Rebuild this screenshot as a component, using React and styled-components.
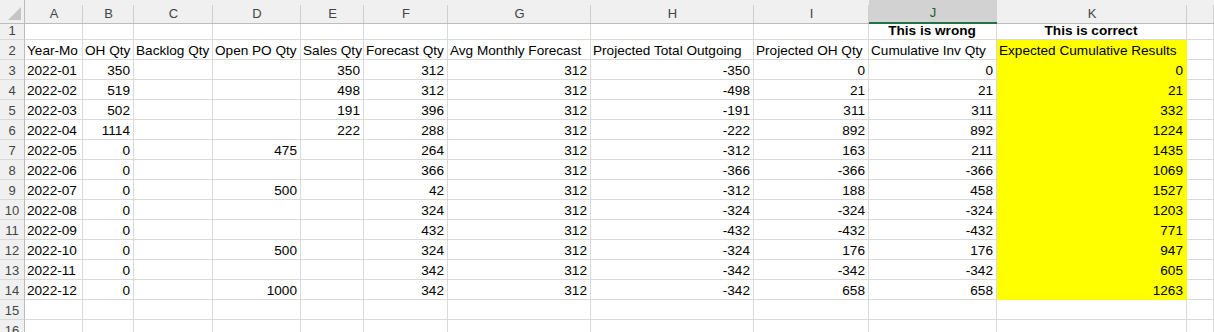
import React from "react"
import styled, { createGlobalStyle } from "styled-components"

const GlobalStyle = createGlobalStyle`
    body {
        margin:0;
        background:#ffffff;
        font-family:"Liberation Sans", Arial, sans-serif;
        overflow:hidden;
    }
`

const COLS = [58, 51, 79, 88, 63, 84, 143, 163, 115, 128, 190]
const LETTERS = ["A", "B", "C", "D", "E", "F", "G", "H", "I", "J", "K", "L"]

const Sheet = styled.div`
    display:grid;
    grid-template-columns: 25px ${COLS.map(c => c + "px").join(" ")} 27px;
    grid-auto-rows:20px;
    width:1214px;
    overflow:hidden;
    font-size:13.6px;
    color:#000;
`
const Corner = styled.div`
    height:24px;
    background:#f0f0f0;
    border-right:1px solid #bcbcbc;
    border-bottom:1px solid #bcbcbc;
    box-sizing:border-box;
    position:relative;
    &::after {
        content:"";
        position:absolute;
        right:3px;
        bottom:3px;
        width:0;
        height:0;
        border-left:13px solid transparent;
        border-bottom:13px solid #c4c4c4;
    }
`
const ColHead = styled.div`
    height:24px;
    box-sizing:border-box;
    display:flex;
    align-items:center;
    justify-content:center;
    padding-top:3px;
    font-size:13px;
    background:${p => p.$active ? "#d2d2d2" : "#f0f0f0"};
    color:${p => p.$active ? "#1a5e35" : "#444"};
    border-bottom:${p => p.$active ? "2px solid #217346" : "1px solid #bcbcbc"};
    position:relative;
    &::after {
        content:"";
        position:absolute;
        right:0;
        top:5px;
        bottom:0;
        width:1px;
        background:#cfcfcf;
    }
`
const RowHead = styled.div`
    box-sizing:border-box;
    background:#f0f0f0;
    color:#444;
    font-size:13px;
    border-right:1px solid #bcbcbc;
    border-bottom:1px solid #d9d9d9;
    display:flex;
    align-items:center;
    justify-content:center;
    padding-top:1px;
`
const Cell = styled.div`
    box-sizing:border-box;
    border-right:1px solid ${p => p.$fill ? p.$fill : "#dadada"};
    border-bottom:1px solid ${p => p.$fill ? p.$fill : "#dadada"};
    background:${p => p.$fill || "transparent"};
    display:flex;
    align-items:center;
    justify-content:${p => p.$align === "right" ? "flex-end" : p.$align === "center" ? "center" : "flex-start"};
    padding:2px 3px 0 2px;
    font-weight:${p => p.$bold ? 700 : 400};
    white-space:nowrap;
    overflow:visible;
`

const headers = ["Year-Mo", "OH Qty", "Backlog Qty", "Open PO Qty", "Sales Qty", "Forecast Qty", "Avg Monthly Forecast", "Projected Total Outgoing", "Projected OH Qty", "Cumulative Inv Qty", "Expected Cumulative Results"]

const data = [
    ["2022-01", 350, "", "", 350, 312, 312, -350, 0, 0, 0],
    ["2022-02", 519, "", "", 498, 312, 312, -498, 21, 21, 21],
    ["2022-03", 502, "", "", 191, 396, 312, -191, 311, 311, 332],
    ["2022-04", 1114, "", "", 222, 288, 312, -222, 892, 892, 1224],
    ["2022-05", 0, "", 475, "", 264, 312, -312, 163, 211, 1435],
    ["2022-06", 0, "", "", "", 366, 312, -366, -366, -366, 1069],
    ["2022-07", 0, "", 500, "", 42, 312, -312, 188, 458, 1527],
    ["2022-08", 0, "", "", "", 324, 312, -324, -324, -324, 1203],
    ["2022-09", 0, "", "", "", 432, 312, -432, -432, -432, 771],
    ["2022-10", 0, "", 500, "", 324, 312, -324, 176, 176, 947],
    ["2022-11", 0, "", "", "", 342, 312, -342, -342, -342, 605],
    ["2022-12", 0, "", 1000, "", 342, 312, -342, 658, 658, 1263],
]

const YELLOW = "#ffff00"

const App = () => {
    const rows = []
    // row 1
    rows.push([...Array(9).fill(""), { v: "This is wrong", bold: true, align: "center" }, { v: "This is correct", bold: true, align: "center" }, ""])
    rows.push([...headers.map((h, i) => ({ v: h, fill: i === 10 ? YELLOW : null })), ""])
    data.forEach(r => {
        rows.push([...r.map((v, i) => ({ v, align: i === 0 ? "left" : "right", fill: i === 10 ? YELLOW : null })), ""])
    })
    rows.push(Array(12).fill(""))
    rows.push(Array(12).fill(""))

    return (
        <>
            <GlobalStyle />
            <Sheet>
                <Corner />
                {/* column L runs past the window edge, so its letter is not in view */}
                {LETTERS.map(l => <ColHead key={l} $active={l === "J"}>{l === "L" ? "" : l}</ColHead>)}
                {rows.map((r, ri) => (
                    <React.Fragment key={ri}>
                        <RowHead>{ri + 1}</RowHead>
                        {r.map((c, ci) => {
                            const cell = typeof c === "object" ? c : { v: c }
                            return (
                                <Cell key={ci} $align={cell.align} $bold={cell.bold} $fill={cell.fill}>
                                    {cell.v}
                                </Cell>
                            )
                        })}
                    </React.Fragment>
                ))}
            </Sheet>
        </>
    )
}

export default App
